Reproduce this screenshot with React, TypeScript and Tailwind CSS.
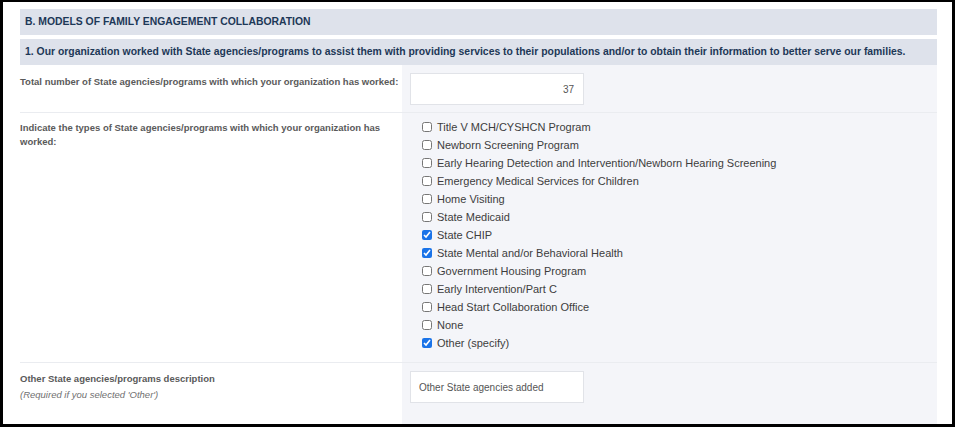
import React from "react";

const agencies: { label: string; checked: boolean }[] = [
  { label: "Title V MCH/CYSHCN Program", checked: false },
  { label: "Newborn Screening Program", checked: false },
  { label: "Early Hearing Detection and Intervention/Newborn Hearing Screening", checked: false },
  { label: "Emergency Medical Services for Children", checked: false },
  { label: "Home Visiting", checked: false },
  { label: "State Medicaid", checked: false },
  { label: "State CHIP", checked: true },
  { label: "State Mental and/or Behavioral Health", checked: true },
  { label: "Government Housing Program", checked: false },
  { label: "Early Intervention/Part C", checked: false },
  { label: "Head Start Collaboration Office", checked: false },
  { label: "None", checked: false },
  { label: "Other (specify)", checked: true },
];

const font = { fontFamily: '"Liberation Sans", Arial, sans-serif' };

export default function App() {
  return (
    <div
      className="w-[955px] h-[427px] bg-white border-black border-[3px] border-t-2 border-b-[3px] pl-[17px] pr-[15px] pt-[7px] overflow-hidden"
      style={font}
    >
      <div className="flex flex-col">
        <div className="h-[26px] bg-[#dee2eb] flex items-center px-[5px] text-[10.4px] font-bold text-[#1d3857]">
          B. MODELS OF FAMILY ENGAGEMENT COLLABORATION
        </div>
        <div className="mt-[4px] h-[26px] bg-[#dee2eb] flex items-center px-[5px] text-[10.4px] font-bold text-[#1d3857] whitespace-nowrap">
          1. Our organization worked with State agencies/programs to assist them with providing services to their populations and/or to obtain their information to better serve our families.
        </div>

        {/* total number */}
        <div className="flex border-b border-[#eaecf0]">
          <div className="w-[382px] shrink-0 pt-[10px] text-[9.5px] font-bold text-[#5a5a5a] leading-[14px]">
            Total number of State agencies/programs with which your organization has worked:
          </div>
          <div className="flex-1 bg-[#f4f5f9] pl-[8px] pt-[8px] pb-[7px]">
            <div className="w-[174px] h-[32px] bg-white border border-[#e1e3e8] flex items-center justify-end pr-[9px] text-[10px] text-[#555]">
              37
            </div>
          </div>
        </div>

        {/* types */}
        <div className="flex border-b border-[#eaecf0]">
          <div className="w-[382px] shrink-0 pt-[8px] text-[9.5px] font-bold text-[#5a5a5a] leading-[14px]">
            Indicate the types of State agencies/programs with which your organization has worked:
          </div>
          <div className="flex-1 bg-[#f4f5f9] pl-[20px] pt-[5px] pb-[10px] flex flex-col">
            {agencies.map((a) => (
              <label key={a.label} className="h-[18px] flex items-center gap-[5px] text-[11px] text-[#3d3d3d]">
                <input
                  type="checkbox"
                  defaultChecked={a.checked}
                  className="w-[10px] h-[10px] m-0 accent-[#1a73e8]"
                />
                <span>{a.label}</span>
              </label>
            ))}
          </div>
        </div>

        {/* other description */}
        <div className="flex h-[70px]">
          <div className="w-[382px] shrink-0 pt-[9px] flex flex-col">
            <span className="text-[9.5px] font-bold text-[#5a5a5a] leading-[14px]">
              Other State agencies/programs description
            </span>
            <span className="mt-[2px] text-[9.5px] italic text-[#707070] leading-[14px]">
              (Required if you selected 'Other')
            </span>
          </div>
          <div className="flex-1 bg-[#f4f5f9] pl-[8px] pt-[8px]">
            <div className="w-[174px] h-[32px] bg-white border border-[#e1e3e8] flex items-center pl-[8px] text-[10px] text-[#555]">
              Other State agencies added
            </div>
          </div>
        </div>
      </div>
    </div>
  );
}
